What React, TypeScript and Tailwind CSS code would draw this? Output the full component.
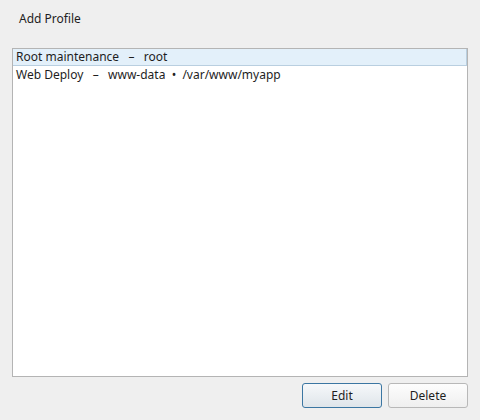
export default function App() {
  return (
    <div className="w-[480px] h-[420px] bg-[#efefef] flex flex-col text-[12px] text-[#1e1e1e]" style={{ fontFamily: '"Noto Sans", sans-serif' }}>
      <div className="h-[48px] flex items-start pt-[10px] pl-[19px]">
        <span className="leading-[17px]">Add Profile</span>
      </div>
      <div className="mx-[12px] h-[329px] bg-white border border-[#b4b4b4] flex flex-col">
        <div className="h-[17px] leading-[16px] bg-[#e3f0fa] border-b border-r border-[#b9cfe0] pl-[3px] whitespace-pre">Root maintenance   –   root</div>
        <div className="h-[17px] leading-[17px] pl-[3px] whitespace-pre">Web Deploy   –   www-data  •  /var/www/myapp</div>
      </div>
      <div className="flex justify-end gap-[6px] pr-[12px] mt-[6px]">
        <button className="w-[80px] h-[25px] rounded-[3px] border border-[#3b76a2] bg-gradient-to-b from-[#f6f8fa] to-[#dfe5ea] text-[12px]">Edit</button>
        <button className="w-[80px] h-[25px] rounded-[3px] border border-[#b8b8b8] bg-gradient-to-b from-[#fdfdfd] to-[#efefef] text-[12px]">Delete</button>
      </div>
    </div>
  );
}
